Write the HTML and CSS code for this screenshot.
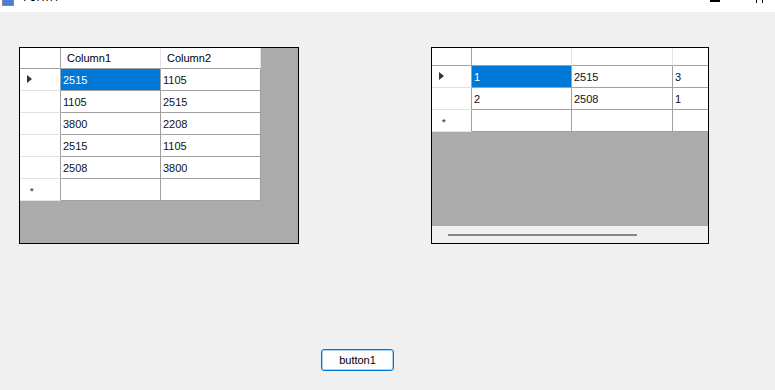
FILE: index.html
```html
<!DOCTYPE html>
<html lang="en">
<head>
  <meta charset="UTF-8" />
  <title>Form1</title>
  <link rel="stylesheet" href="styles.css">
</head>
<body>

<div class="titlebar">
  <div class="titlebar-inner">
    <span class="app-icon"></span>
    <span class="title">Form1</span>
    <span class="caption-min"></span>
    <span class="caption-max"></span>
  </div>
</div>

<div class="form">
  <div class="grids">

    <div class="dgv dgv-left">
      <div class="sheet sheet-left">
        <div class="corner"></div>
        <div class="colhead">Column1</div>
        <div class="colhead">Column2</div>

        <div class="rowhead current"><span class="arrow"></span></div>
        <div class="cell selected">2515</div>
        <div class="cell">1105</div>

        <div class="rowhead"></div>
        <div class="cell">1105</div>
        <div class="cell">2515</div>

        <div class="rowhead"></div>
        <div class="cell">3800</div>
        <div class="cell">2208</div>

        <div class="rowhead"></div>
        <div class="cell">2515</div>
        <div class="cell">1105</div>

        <div class="rowhead"></div>
        <div class="cell">2508</div>
        <div class="cell">3800</div>

        <div class="rowhead"><span class="star">*</span></div>
        <div class="cell"></div>
        <div class="cell"></div>
      </div>
    </div>

    <div class="dgv dgv-right">
      <div class="viewport">
        <div class="sheet sheet-right">
          <div class="corner"></div>
          <div class="colhead"></div>
          <div class="colhead"></div>
          <div class="colhead"></div>

          <div class="rowhead current"><span class="arrow"></span></div>
          <div class="cell selected">1</div>
          <div class="cell">2515</div>
          <div class="cell">3</div>

          <div class="rowhead"></div>
          <div class="cell">2</div>
          <div class="cell">2508</div>
          <div class="cell">1</div>

          <div class="rowhead"><span class="star">*</span></div>
          <div class="cell"></div>
          <div class="cell"></div>
          <div class="cell"></div>
        </div>
      </div>
      <div class="hscroll"><div class="thumb"></div></div>
    </div>

  </div>

  <div class="button-row">
    <button class="btn">button1</button>
  </div>
</div>

</body>
</html>
```

FILE: styles.css
```css
html, body {
  margin: 0;
  padding: 0;
  height: 100%;
  overflow: hidden;
  background: #f0f0f0;
  font-family: "Liberation Sans", Arial, sans-serif;
  font-size: 11px;
  color: #000;
}

/* window caption, mostly cut off at the top */
.titlebar {
  height: 12px;
  overflow: hidden;
  background: #fff;
}

.titlebar-inner {
  display: flex;
  align-items: flex-start;
  height: 30px;
  margin-top: -19px;
}

.app-icon {
  width: 12px;
  height: 12px;
  margin: 13px 0 0 2px;
  border: 1px solid #8a8a8a;
  background: #4a7fd8;
  box-sizing: border-box;
}

.title {
  margin: 9px 0 0 9px;
  font-family: "Noto Sans", sans-serif;
  font-size: 12px;
  line-height: 14px;
}

.caption-min {
  margin: 19px 36px 0 auto;
  width: 10px;
  height: 2px;
  background: #000;
}

.caption-max {
  width: 5px;
  height: 12px;
  margin: 10px 12px 0 0;
  border-left: 1px solid #000;
  border-right: 1px solid #000;
}

.form {
  padding: 35px 0 0 19px;
}

.grids {
  display: flex;
  gap: 132px;
  align-items: flex-start;
}

/* DataGridView */
.dgv {
  box-sizing: border-box;
  height: 197px;
  border: 1px solid #000;
  background: #ababab;
  overflow: hidden;
}

.dgv-left { width: 280px; }

.dgv-right {
  width: 278px;
  display: flex;
  flex-direction: column;
}

.viewport {
  flex: 1;
  overflow: hidden;
}

.sheet {
  display: grid;
  background: #fff;
}

.sheet-left {
  width: 241px;
  grid-template-columns: 41px 100px 100px;
  grid-template-rows: 21px repeat(6, 22px);
}

.sheet-right {
  width: 341px;
  grid-template-columns: 40px 100px 101px 100px;
  grid-template-rows: 18px repeat(3, 22px);
}

.sheet > div {
  box-sizing: border-box;
  border-right: 1px solid #a0a0a0;
  border-bottom: 1px solid #a0a0a0;
  display: flex;
  align-items: center;
  white-space: nowrap;
  overflow: hidden;
}

.colhead {
  padding-left: 6px;
  border-right-color: #e3e3e3 !important;
}

.rowhead {
  position: relative;
  border-bottom-color: #e3e3e3 !important;
}

.cell {
  padding-left: 2px;
  padding-top: 1px;
  color: #111;
}

.cell.selected {
  background: #0078d7;
  color: #fff;
}

.arrow {
  position: absolute;
  left: 7px;
  top: 6px;
  width: 0;
  height: 0;
  border-top: 4px solid transparent;
  border-bottom: 4px solid transparent;
  border-left: 5px solid #333;
}

.star {
  position: absolute;
  left: 10px;
  top: 7px;
  font-size: 9px;
  font-weight: bold;
  color: #555;
}

.hscroll {
  height: 17px;
  background: #f0f0f0;
  position: relative;
  flex: none;
}

.thumb {
  position: absolute;
  left: 16px;
  top: 8px;
  width: 189px;
  height: 2px;
  background: #858585;
}

.button-row {
  margin-top: 105px;
  padding-left: 302px;
}

.btn {
  width: 73px;
  height: 22px;
  box-sizing: border-box;
  border: 1px solid #0078d7;
  border-radius: 3px;
  background: #fdfdfd;
  box-shadow: inset 0 0 0 1px rgba(0, 120, 215, 0.35);
  font-family: "Liberation Sans", Arial, sans-serif;
  font-size: 11px;
  color: #000;
  padding: 0;
}
```
